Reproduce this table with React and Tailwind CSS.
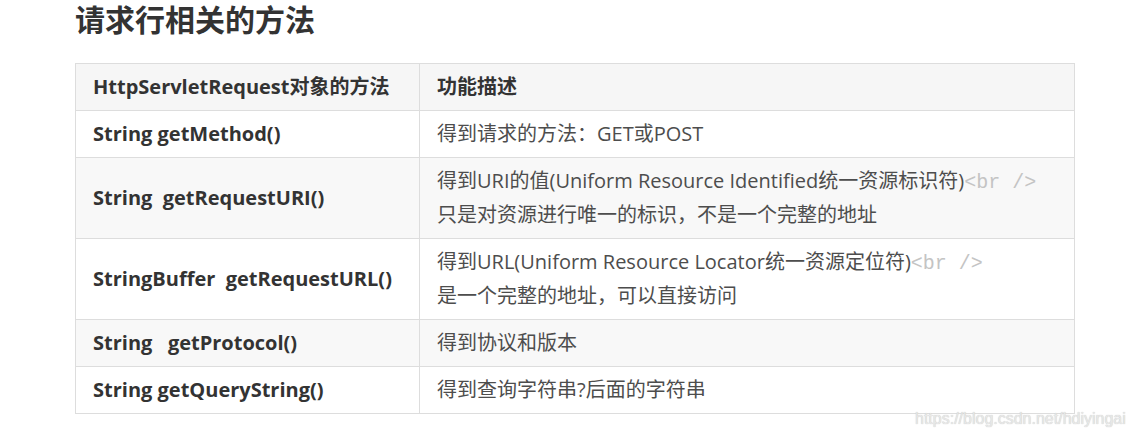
import React from "react";

const rows = [
  { m: "String getMethod()", d: [["得到请求的方法：GET或POST"]], bg: "bg-white", h: "h-[47px]" },
  {
    m: "String  getRequestURI()",
    d: [["得到URI的值(Uniform Resource Identified统一资源标识符)", "<br />"], ["只是对资源进行唯一的标识，不是一个完整的地址"]],
    bg: "bg-[#f8f8f8]",
    h: "h-[81px]",
  },
  {
    m: "StringBuffer  getRequestURL()",
    d: [["得到URL(Uniform Resource Locator统一资源定位符)", "<br />"], ["是一个完整的地址，可以直接访问"]],
    bg: "bg-white",
    h: "h-[81px]",
  },
  { m: "String   getProtocol()", d: [["得到协议和版本"]], bg: "bg-[#f8f8f8]", h: "h-[47px]" },
  { m: "String getQueryString()", d: [["得到查询字符串?后面的字符串"]], bg: "bg-white", h: "h-[47px]" },
];

export default function App() {
  return (
    <div
      className="relative w-[1132px] h-[435px] bg-white overflow-hidden text-[#4d4d4d]"
      style={{ fontFamily: '"Open Sans", "Noto Sans CJK SC", sans-serif' }}
    >
      <h2 className="pl-[75px] text-[30px] leading-[40px] font-bold text-[#333]">请求行相关的方法</h2>
      <table className="ml-[75px] mt-[23px] w-[1000px] border-collapse text-[20px] leading-[32px]">
        <thead>
          <tr className="bg-[#f6f6f6] h-[47px]">
            <th className="w-[344px] border border-[#ddd] px-[17px] text-left font-bold text-[#333] whitespace-pre">
              HttpServletRequest对象的方法
            </th>
            <th className="border border-[#ddd] px-[17px] text-left font-bold text-[#333]">功能描述</th>
          </tr>
        </thead>
        <tbody>
          {rows.map((r, i) => (
            <tr key={i} className={`${r.bg} ${r.h}`}>
              <td className="border border-[#ddd] px-[17px] font-bold text-[#333] whitespace-pre">{r.m}</td>
              <td className="border border-[#ddd] px-[17px]">
                {r.d.map((line, j) => (
                  <div key={j} className="whitespace-pre">
                    {line[0]}
                    {line[1] && (
                      <span
                        className="text-[#c4c4c4] text-[20px]"
                        style={{ fontFamily: '"Liberation Mono", "DejaVu Sans Mono", monospace' }}
                      >
                        {line[1]}
                      </span>
                    )}
                  </div>
                ))}
              </td>
            </tr>
          ))}
        </tbody>
      </table>
      <div
        className="absolute left-[915px] top-[407px] text-[16px] leading-[24px] text-[#e8e8e8]"
        style={{ fontFamily: '"Liberation Sans", sans-serif', textShadow: "0 0 1px #bbb" }}
      >
        https://blog.csdn.net/hdiyingai
      </div>
    </div>
  );
}
